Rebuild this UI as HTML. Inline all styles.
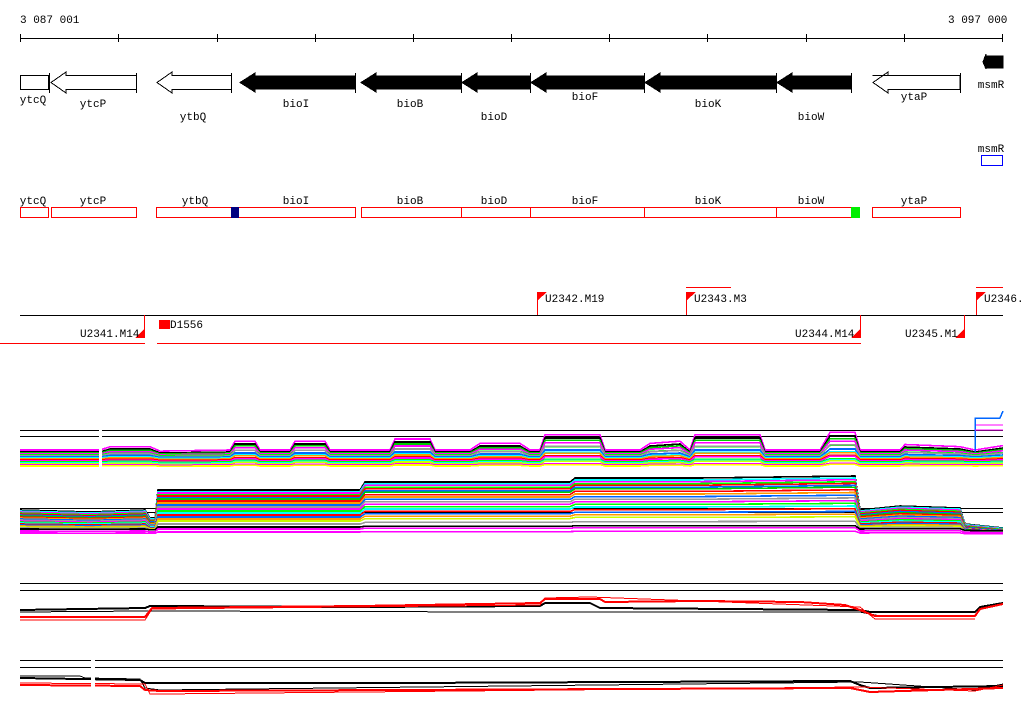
<!DOCTYPE html>
<html><head><meta charset="utf-8"><style>
html,body{margin:0;padding:0;background:#fff;}
svg{display:block;font-family:"Liberation Mono","DejaVu Sans Mono",monospace;font-size:11px;}
use,path{vector-effect:non-scaling-stroke;}
</style></head><body>
<svg width="1024" height="714" viewBox="0 0 1024 714" xmlns="http://www.w3.org/2000/svg" shape-rendering="crispEdges">
<defs>
<path id="b1" fill="none" d="M20,0 L100,0 L110,-3 L150,-3 L160,1 L230,0 L235,-8 L255,-8 L260,0 L290,0 L295,-8 L325,-8 L330,0 L390,0 L395,-10 L430,-10 L435,0 L470,0 L480,-6 L520,-6 L530,0 L540,0 L545,-14 L600,-14 L605,0 L640,0 L650,-6 L680,-8 L690,0 L695,-14 L760,-14 L765,0 L820,0 L830,-16 L855,-16 L860,0 L900,0 L905,-5 L960,-3 L975,0 L1003,-4"/>
<path id="b2" fill="none" d="M20,0 L90,2 L145,0 L150,8 L155,8 L158,-20 L250,-20 L360,-20 L365,-28 L480,-28 L570,-28 L575,-32 L700,-32 L855,-34 L860,0 L900,-4 L960,-2 L965,14 L1003,18"/>
</defs>
<text x="20" y="23">3 087 001</text>
<text x="948" y="23">3 097 000</text>
<path d="M20,38.5H1003" stroke="#000"/>
<path stroke="#000" d="M20.5,34v8M118.5,34v8M217.5,34v8M315.5,34v8M413.5,34v8M511.5,34v8M609.5,34v8M707.5,34v8M806.5,34v8M904.5,34v8M1002.5,34v8"/>
<g stroke="#000" fill="#fff">
<rect x="20.5" y="75.5" width="28" height="14"/>
<path d="M49.5,73v20"/>
<path d="M136.5,73v20 M136.5,75.5 H66 L66,72 L51,82.5 L66,93 L66,89.5 H136.5"/>
<path d="M231.5,73v20 M231.5,75.5 H172 L172,72 L157,82.5 L172,93 L172,89.5 H231.5"/>
<path d="M872.5,75.5 H888 L888,72 L873,82.5 L888,93 L888,89.5 H960 V75.5 H888" />
<path d="M960.5,73v20"/>
</g>
<g fill="#000" stroke="#000">
<path d="M355,76 H255 V73 L240,82.5 L255,92 V89 H355Z"/><path d="M355.5,73v20"/>
<path d="M461,76 H376 V73 L361,82.5 L376,92 V89 H461Z"/><path d="M461.5,73v20"/>
<path d="M530,76 H477 V73 L462,82.5 L477,92 V89 H530Z"/><path d="M530.5,73v20"/>
<path d="M644,76 H546 V73 L531,82.5 L546,92 V89 H644Z"/><path d="M644.5,73v20"/>
<path d="M776,76 H660 V73 L645,82.5 L660,92 V89 H776Z"/><path d="M776.5,73v20"/>
<path d="M851,76 H792 V73 L777,82.5 L792,92 V89 H851Z"/><path d="M851.5,73v20"/>
<path d="M1003,56 H986 V54 L983,62 L986,69 V68 H1003Z"/>
</g>
<g text-anchor="middle">
<text x="33" y="103">ytcQ</text><text x="93" y="107">ytcP</text><text x="193" y="120">ytbQ</text>
<text x="296" y="107">bioI</text><text x="410" y="107">bioB</text><text x="494" y="120">bioD</text>
<text x="585" y="100">bioF</text><text x="708" y="107">bioK</text><text x="811" y="120">bioW</text>
<text x="914" y="100">ytaP</text><text x="991" y="88">msmR</text>
</g>
<g text-anchor="middle">
<text x="33" y="204">ytcQ</text><text x="93" y="204">ytcP</text><text x="195" y="204">ytbQ</text>
<text x="296" y="204">bioI</text><text x="410" y="204">bioB</text><text x="494" y="204">bioD</text>
<text x="585" y="204">bioF</text><text x="708" y="204">bioK</text><text x="811" y="204">bioW</text>
<text x="914" y="204">ytaP</text><text x="991" y="152">msmR</text>
</g>
<rect x="981.5" y="155.5" width="21" height="10" fill="none" stroke="#00f"/>
<g fill="none" stroke="#f00">
<rect x="20.5" y="207.5" width="28" height="10"/>
<rect x="51.5" y="207.5" width="85" height="10"/>
<rect x="156.5" y="207.5" width="199" height="10"/>
<rect x="361.5" y="207.5" width="169" height="10"/>
<rect x="530.5" y="207.5" width="114" height="10"/>
<rect x="644.5" y="207.5" width="132" height="10"/>
<rect x="776.5" y="207.5" width="83" height="10"/>
<rect x="872.5" y="207.5" width="88" height="10"/>
<path d="M461.5,207v11"/>
</g>
<rect x="231" y="207" width="8" height="11" fill="#000080"/>
<rect x="851" y="207" width="9" height="11" fill="#0e0"/>
<path d="M20,315.5H1003" stroke="#000"/>
<path d="M0,343.5H145 M157,343.5H861" stroke="#f00"/>
<path d="M686,287.5H731 M976,287.5H1003" stroke="#f00"/>
<g stroke="#f00" fill="none">
<path d="M537.5,292v23 M686.5,292v23 M976.5,292v23 M144.5,315v23 M860.5,315v23 M964.5,315v23"/>
</g>
<g fill="#f00">
<path d="M538,292h9l-9,8z"/><path d="M687,292h9l-9,8z"/><path d="M977,292h9l-9,8z"/>
<path d="M144,329v9h-9z"/><path d="M860,329v9h-9z"/><path d="M964,329v9h-9z"/>
<rect x="159" y="320" width="11" height="9"/>
</g>
<text x="545" y="302">U2342.M19</text>
<text x="694" y="302">U2343.M3</text>
<text x="984" y="302">U2346.M</text>
<text x="80" y="337">U2341.M14</text>
<text x="170" y="328">D1556</text>
<text x="795" y="337">U2344.M14</text>
<text x="905" y="337">U2345.M1</text>
<!-- band 1 -->
<path d="M20,430.5H99 M102,430.5H1003 M20,436.5H1003" stroke="#000"/>
<g stroke-width="1.6" fill="none">
<use href="#b1" transform="translate(0,450) scale(1,1.1)" stroke="#f0f"/>
<use href="#b1" transform="translate(0,452)" stroke="#000"/>
<use href="#b1" transform="translate(0,453) scale(1,0.9)" stroke="#0c0"/>
<use href="#b1" transform="translate(0,454) scale(1,0.8)" stroke="#f0f"/>
<use href="#b1" transform="translate(0,455) scale(1,0.6)" stroke="#0f0"/>
<use href="#b1" transform="translate(0,456) scale(1,0.7)" stroke="#999"/>
<use href="#b1" transform="translate(0,457) scale(1,0.5)" stroke="#06f"/>
<use href="#b1" transform="translate(0,458) scale(1,0.4)" stroke="#0ff"/>
<use href="#b1" transform="translate(0,459) scale(1,0.4)" stroke="#f90"/>
<use href="#b1" transform="translate(0,460) scale(1,0.3)" stroke="#f00"/>
<use href="#b1" transform="translate(0,461) scale(1,0.3)" stroke="#f0f"/>
<use href="#b1" transform="translate(0,462) scale(1,0.2)" stroke="#0f0"/>
<use href="#b1" transform="translate(0,463) scale(1,0.2)" stroke="#0ff"/>
<use href="#b1" transform="translate(0,464) scale(1,0.2)" stroke="#cf0"/>
<use href="#b1" transform="translate(0,465) scale(1,0.1)" stroke="#f0f"/>
<use href="#b1" transform="translate(0,466) scale(1,0.1)" stroke="#ff0"/>
</g>
<path d="M975,452V418H1000L1003,411" stroke="#06f" fill="none" stroke-width="1.5"/>
<path d="M975,430H1003 M976,425H1003" stroke="#f0f"/>
<rect x="99" y="425" width="3" height="45" fill="#fff"/>
<!-- band 2 -->
<path d="M20,508.5H1003 M20,512.5H1003" stroke="#000"/>
<g stroke-width="1.6" fill="none">
<use href="#b2" transform="translate(0,510)" stroke="#000"/>
<use href="#b2" transform="translate(0,511) scale(1,0.97)" stroke="#0ff"/>
<use href="#b2" transform="translate(0,512) scale(1,0.95)" stroke="#f0f"/>
<use href="#b2" transform="translate(0,513) scale(1,0.92)" stroke="#0f0"/>
<use href="#b2" transform="translate(0,514) scale(1,0.9)" stroke="#f00"/>
<use href="#b2" transform="translate(0,515) scale(1,0.87)" stroke="#06f"/>
<use href="#b2" transform="translate(0,516) scale(1,0.85)" stroke="#0c0"/>
<use href="#b2" transform="translate(0,517) scale(1,0.8)" stroke="#f00"/>
<use href="#b2" transform="translate(0,518) scale(1,0.75)" stroke="#f90"/>
<use href="#b2" transform="translate(0,519) scale(1,0.7)" stroke="#06f"/>
<use href="#b2" transform="translate(0,520) scale(1,0.65)" stroke="#999"/>
<use href="#b2" transform="translate(0,521) scale(1,0.6)" stroke="#f0f"/>
<use href="#b2" transform="translate(0,522) scale(1,0.55)" stroke="#0f0"/>
<use href="#b2" transform="translate(0,523) scale(1,0.5)" stroke="#0ff"/>
<use href="#b2" transform="translate(0,524) scale(1,0.45)" stroke="#f00"/>
<use href="#b2" transform="translate(0,525) scale(1,0.4)" stroke="#06f"/>
<use href="#b2" transform="translate(0,526) scale(1,0.35)" stroke="#f90"/>
<use href="#b2" transform="translate(0,527) scale(1,0.3)" stroke="#cf0"/>
<use href="#b2" transform="translate(0,528) scale(1,0.2)" stroke="#999"/>
<use href="#b2" transform="translate(0,529) scale(1,0.1)" stroke="#000"/>
<use href="#b2" transform="translate(0,531) scale(1,0.1)" stroke="#f0f"/>
<use href="#b2" transform="translate(0,533) scale(1,0.05)" stroke="#f0f"/>
</g>
<!-- band 3 -->
<path d="M20,583.5H1003 M20,590.5H1003" stroke="#000"/>
<g fill="none">
<path stroke="#000" stroke-width="2" d="M20,610 L145,608 L150,606 L360,607 L540,606 L545,603 L590,603 L600,608 L860,610 L870,612 L975,612 L980,607 L1003,603"/>
<path stroke="#000" d="M20,612 L145,611 L520,612 L860,612 L880,616 L975,616"/>
<path stroke="#f00" stroke-width="2" d="M20,617 L145,617 L152,608 L360,606 L540,603 L545,599 L600,599 L605,602 L700,601 L800,602 L845,605 L860,610 L875,616 L975,616 L980,609 L1003,604"/>
<path stroke="#f00" d="M20,620 L145,620 L152,609 L540,605 L545,598 L590,597 L860,607 L875,619 L975,619"/>
</g>
<!-- band 4 -->
<path d="M20,660.5H91 M95,660.5H1003 M20,667.5H91 M95,667.5H1003" stroke="#000"/>
<g fill="none">
<path stroke="#000" stroke-width="2" d="M20,678 L140,680 L145,683 L160,683 L400,683 L850,681 L860,685 L870,688 L1003,686"/>
<path stroke="#000" d="M20,676 L80,676 L85,678 L140,679 L145,688 L160,690 L860,682 L975,690 L1003,684"/>
<path stroke="#f00" stroke-width="2" d="M20,685 L140,686 L145,690 L160,691 L400,690 L850,688 L870,692 L1003,688"/>
<path stroke="#f00" d="M20,683 L145,684 L150,694 L160,694 L860,687 L975,691 L1003,685"/>
</g>
<rect x="91" y="655" width="4" height="40" fill="#fff"/>
</svg>
</body></html>
